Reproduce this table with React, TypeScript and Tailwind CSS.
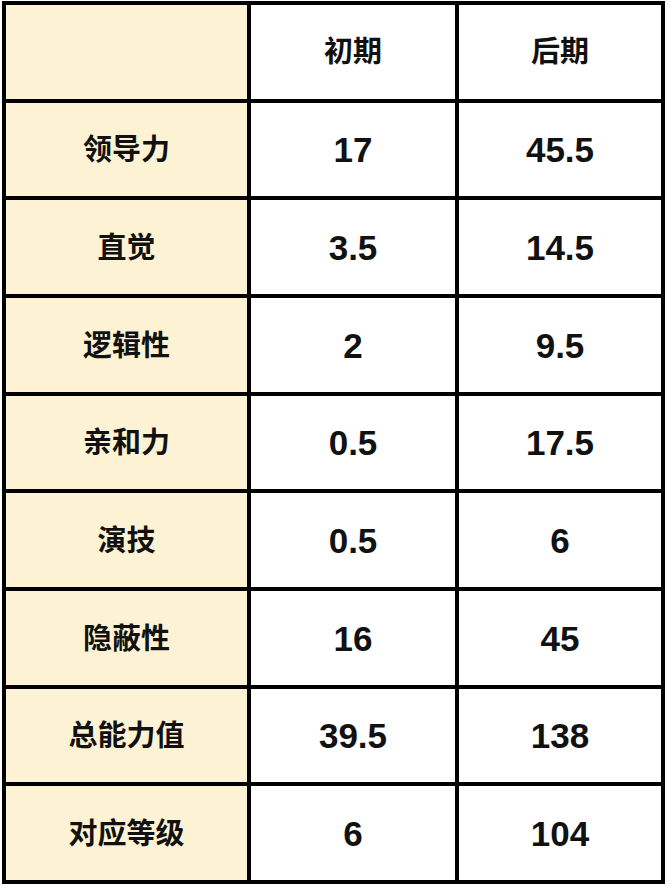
const rows: [string, string, string][] = [
  ['领导力', '17', '45.5'],
  ['直觉', '3.5', '14.5'],
  ['逻辑性', '2', '9.5'],
  ['亲和力', '0.5', '17.5'],
  ['演技', '0.5', '6'],
  ['隐蔽性', '16', '45'],
  ['总能力值', '39.5', '138'],
  ['对应等级', '6', '104'],
];

const font = { fontFamily: '"Liberation Sans", "Noto Sans CJK SC", sans-serif' };

export default function App() {
  return (
    <div className="h-[892px] w-[672px] bg-white pl-[2px] pt-[1px]" style={font}>
      <div className="grid h-[883px] w-[663px] grid-cols-[241px_204px_202px] grid-rows-9 gap-[4px] bg-black p-[4px] font-bold text-[#111]">
        <div className="bg-[#fdf3d4]" />
        <div className="flex items-center justify-center bg-white pt-[2px] text-[29px]">初期</div>
        <div className="flex items-center justify-center bg-white pt-[2px] text-[29px]">后期</div>
        {rows.map(([label, early, late]) => (
          <div key={label} className="contents">
            <div className="flex items-center justify-center bg-[#fdf3d4] pt-[3px] text-[29px]">{label}</div>
            <div className="flex items-center justify-center bg-white pt-[2px] text-[35px]">{early}</div>
            <div className="flex items-center justify-center bg-white pt-[2px] text-[35px]">{late}</div>
          </div>
        ))}
      </div>
    </div>
  );
}
